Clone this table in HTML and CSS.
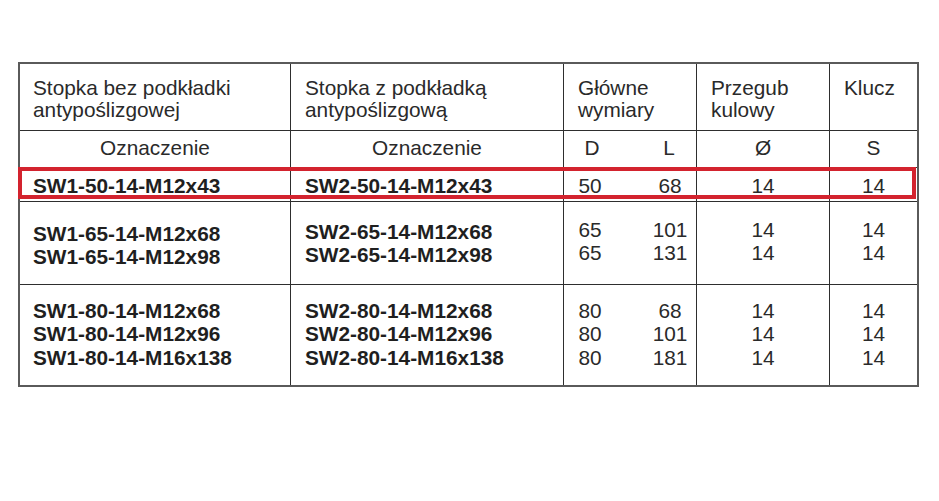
FILE: index.html
```html
<!DOCTYPE html>
<html lang="pl">
<head>
<meta charset="utf-8">
<title>Stopka – oznaczenia</title>
<link rel="stylesheet" href="styles.css">
</head>
<body>
<div class="sheet">
  <div class="spec">
    <div class="cell r1 c1">Stopka bez podkładki<br>antypoślizgowej</div>
    <div class="cell r1 c2">Stopka z podkładką<br>antypoślizgową</div>
    <div class="cell r1 c3">Główne<br>wymiary</div>
    <div class="cell r1 c4">Przegub<br>kulowy</div>
    <div class="cell r1 c5">Klucz</div>

    <div class="cell r2 c1 center">Oznaczenie</div>
    <div class="cell r2 c2 center">Oznaczenie</div>
    <div class="cell r2 c3 dims dims-head"><span>D</span><span>L</span></div>
    <div class="cell r2 c4 center">Ø</div>
    <div class="cell r2 c5 center">S</div>

    <div class="cell r3 c1 code">SW1-50-14-M12x43</div>
    <div class="cell r3 c2 code">SW2-50-14-M12x43</div>
    <div class="cell r3 c3 dims"><span>50</span><span>68</span></div>
    <div class="cell r3 c4 center">14</div>
    <div class="cell r3 c5 center">14</div>

    <div class="cell r4 c1 code lower">SW1-65-14-M12x68<br>SW1-65-14-M12x98</div>
    <div class="cell r4 c2 code mid">SW2-65-14-M12x68<br>SW2-65-14-M12x98</div>
    <div class="cell r4 c3 dims"><span>65<br>65</span><span>101<br>131</span></div>
    <div class="cell r4 c4 center">14<br>14</div>
    <div class="cell r4 c5 center">14<br>14</div>

    <div class="cell r5 c1 code">SW1-80-14-M12x68<br>SW1-80-14-M12x96<br>SW1-80-14-M16x138</div>
    <div class="cell r5 c2 code">SW2-80-14-M12x68<br>SW2-80-14-M12x96<br>SW2-80-14-M16x138</div>
    <div class="cell r5 c3 dims"><span>80<br>80<br>80</span><span>68<br>101<br>181</span></div>
    <div class="cell r5 c4 center">14<br>14<br>14</div>
    <div class="cell r5 c5 center">14<br>14<br>14</div>
  </div>
  <div class="highlight"></div>
</div>
</body>
</html>
```

FILE: styles.css
```css
html, body {
  margin: 0;
  padding: 0;
  background: #ffffff;
}

body {
  font-family: "Liberation Sans", Arial, sans-serif;
  font-size: 20.8px;
  color: #2a2a2a;
}

.sheet {
  position: relative;
  width: max-content;
  margin: 62px 0 0 18px;
}

.spec {
  display: grid;
  grid-template-columns: 270px 273px 133px 133px 88px;
  grid-template-rows: 66px 37px 34px 83px 101px;
  border: 2px solid #5a5a5a;
}

.cell {
  box-sizing: border-box;
  border-left: 1px solid #2e2e2e;
  border-top: 1px solid #2e2e2e;
  padding-left: 14px;
  white-space: nowrap;
}

.c1 {
  border-left: none;
  padding-left: 13px;
}

.r1 {
  border-top: none;
  padding-top: 13px;
  line-height: 22px;
}

.r2 {
  padding-top: 6px;
  line-height: 22px;
}

.r3 {
  padding-top: 6px;
  line-height: 23px;
}

.r4 {
  padding-top: 17px;
  line-height: 22.5px;
}

.r4.mid {
  padding-top: 19px;
}

.r4.lower {
  padding-top: 21px;
}

.r5 {
  padding-top: 14px;
  line-height: 23.3px;
}

.center {
  text-align: center;
  padding-left: 0;
}

.code {
  font-weight: bold;
  color: #1f1f1f;
}

.dims {
  display: grid;
  grid-template-columns: 52px 1fr 52px;
  padding-left: 0;
  text-align: center;
}

.dims span:last-child {
  grid-column: 3;
}

.dims-head span:first-child {
  padding-left: 4px;
}

.dims-head span:last-child {
  padding-right: 2px;
}

.highlight {
  position: absolute;
  left: 0;
  top: 105px;
  width: 898px;
  height: 32px;
  box-sizing: border-box;
  border: 4px solid #d3232e;
  pointer-events: none;
}
```
